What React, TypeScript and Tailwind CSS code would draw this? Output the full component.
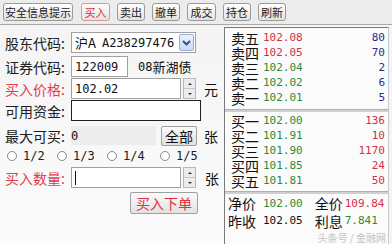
import React from "react";

const CJK = "'Noto Sans CJK SC', 'Noto Sans', sans-serif";
const MONO = "'DejaVu Sans Mono', 'Liberation Mono', monospace";

function Tab({ label, active, w }: { label: string; active?: boolean; w: string }) {
  return (
    <div
      className={`${w} h-[18px] flex items-center justify-center rounded-[3px] border text-[11px] leading-none whitespace-nowrap bg-gradient-to-b from-[#ffffff] to-[#e2e2e2] ${
        active ? "border-[#d89aa0] text-[#e0303c]" : "border-[#9a9a9a] text-[#202020]"
      }`}
    >
      {label}
    </div>
  );
}

function Spinner() {
  return (
    <div className="w-[13px] h-[21px] flex flex-col ml-[2px] border border-[#b8b8b8] bg-[#ececec]">
      <div className="flex-1 flex items-center justify-center border-b border-[#c8c8c8]">
        <div className="w-0 h-0 border-l-[2px] border-r-[2px] border-b-[2px] border-l-transparent border-r-transparent border-b-[#333]" />
      </div>
      <div className="flex-1 flex items-center justify-center">
        <div className="w-0 h-0 border-l-[2px] border-r-[2px] border-t-[2px] border-l-transparent border-r-transparent border-t-[#333]" />
      </div>
    </div>
  );
}

function Label({ text, red }: { text: string; red?: boolean }) {
  return (
    <div className={`w-[66px] shrink-0 text-[14px] leading-none whitespace-nowrap ${red ? "text-[#e0404c]" : "text-[#202020]"}`}>
      {text}
    </div>
  );
}

function Radio({ label, w }: { label: string; w: string }) {
  return (
    <div className={`${w} flex items-center gap-[6px]`}>
      <div className="w-[10px] h-[10px] rounded-full border border-[#8a8a8a] bg-white" />
      <span className="text-[12px] leading-none text-[#202020]" style={{ fontFamily: MONO }}>
        {label}
      </span>
    </div>
  );
}

type Row = { l: string; p: string; pc: string; q: string; qc: string };

const sells: Row[] = [
  { l: "卖五", p: "102.08", pc: "text-[#d0304c]", q: "80", qc: "text-[#2a2a8a]" },
  { l: "卖四", p: "102.05", pc: "text-[#d0304c]", q: "70", qc: "text-[#2a2a8a]" },
  { l: "卖三", p: "102.04", pc: "text-[#2e8a3a]", q: "2", qc: "text-[#2a2a8a]" },
  { l: "卖二", p: "102.02", pc: "text-[#2e8a3a]", q: "6", qc: "text-[#2a2a8a]" },
  { l: "卖一", p: "102.01", pc: "text-[#2e8a3a]", q: "5", qc: "text-[#2a2a8a]" },
];
const buys: Row[] = [
  { l: "买一", p: "102.00", pc: "text-[#2e8a3a]", q: "136", qc: "text-[#d0304c]" },
  { l: "买二", p: "101.91", pc: "text-[#2e8a3a]", q: "10", qc: "text-[#d0304c]" },
  { l: "买三", p: "101.90", pc: "text-[#2e8a3a]", q: "1170", qc: "text-[#d0304c]" },
  { l: "买四", p: "101.85", pc: "text-[#2e8a3a]", q: "24", qc: "text-[#d0304c]" },
  { l: "买五", p: "101.81", pc: "text-[#2e8a3a]", q: "50", qc: "text-[#d0304c]" },
];

function BookRow({ r }: { r: Row }) {
  return (
    <div className="h-[15px] flex items-center pl-[6px] pr-[3px] whitespace-nowrap">
      <span className="w-[32px] text-[14px] leading-none text-[#111]">{r.l}</span>
      <span className={`text-[11px] leading-none ${r.pc}`} style={{ fontFamily: MONO }}>
        {r.p}
      </span>
      <span className={`ml-auto text-[11px] leading-none ${r.qc}`} style={{ fontFamily: MONO }}>
        {r.q}
      </span>
    </div>
  );
}

export default function App() {
  return (
    <div className="w-[392px] h-[244px] bg-[#f4f4f4] overflow-hidden flex flex-col" style={{ fontFamily: CJK }}>
      {/* tab bar */}
      <div className="h-[25px] shrink-0 flex items-center pl-[3px] gap-[7px] bg-[#ececec] border-b border-[#a8a8a8]">
        <div className="mr-[1px]">
          <Tab label="安全信息提示" w="w-[70px]" />
        </div>
        <Tab label="买入" active w="w-[29px]" />
        <Tab label="卖出" w="w-[28px]" />
        <Tab label="撤单" w="w-[28px]" />
        <Tab label="成交" w="w-[29px]" />
        <Tab label="持仓" w="w-[28px]" />
        <Tab label="刷新" w="w-[28px]" />
      </div>

      <div className="flex flex-1 min-h-0">
        {/* left form */}
        <div className="w-[224px] shrink-0 flex flex-col pl-[5px] pt-[7px] bg-gradient-to-b from-[#f4f4f4] to-[#fbfbfb]">
          {/* 股东代码 */}
          <div className="h-[21px] flex items-center">
            <Label text="股东代码:" />
            <div className="w-[125px] h-[21px] flex items-center bg-white border border-[#a0a0a0] whitespace-nowrap">
              <span className="pl-[3px] text-[13px] leading-none text-[#111]">沪A</span>
              <span className="pl-[6px] text-[12px] leading-none text-[#111]" style={{ fontFamily: MONO }}>
                A238297476
              </span>
              <div className="ml-auto w-[15px] h-[17px] mr-[1px] flex items-center justify-center rounded-[2px] border border-[#98b0d0] bg-gradient-to-b from-[#eaf2fc] to-[#c8daf2]">
                <svg width="9" height="6" viewBox="0 0 9 6">
                  <path d="M1 1 L4.5 4.5 L8 1" stroke="#2a4a8a" strokeWidth="1.8" fill="none" />
                </svg>
              </div>
            </div>
          </div>
          {/* 证券代码 */}
          <div className="h-[21px] mt-[3px] flex items-center whitespace-nowrap">
            <Label text="证券代码:" />
            <div className="w-[57px] h-[21px] flex items-center bg-white border border-[#a0a0a0]">
              <span className="pl-[3px] text-[12px] leading-none text-[#111]" style={{ fontFamily: MONO }}>
                122009
              </span>
            </div>
            <span className="ml-[10px] text-[12px] leading-none text-[#111]" style={{ fontFamily: MONO }}>
              08
            </span>
            <span className="text-[13px] leading-none text-[#111]">新湖债</span>
          </div>
          {/* 买入价格 */}
          <div className="h-[21px] mt-[1px] flex items-center">
            <Label text="买入价格:" red />
            <div className="w-[110px] h-[21px] flex items-center bg-white border border-[#a0a0a0]">
              <span className="pl-[3px] text-[12px] leading-none text-[#111]" style={{ fontFamily: MONO }}>
                102.02
              </span>
            </div>
            <Spinner />
            <span className="ml-[8px] text-[14px] leading-none text-[#111]">元</span>
          </div>
          {/* 可用资金 */}
          <div className="h-[21px] mt-[1px] flex items-center">
            <Label text="可用资金:" />
            <div className="w-[130px] h-[21px] bg-white border border-[#202020]" />
          </div>
          {/* 最大可买 */}
          <div className="h-[21px] mt-[4px] flex items-center">
            <Label text="最大可买:" />
            <div className="w-[85px] h-[19px] flex items-center bg-[#ececec]">
              <span className="text-[12px] leading-none text-[#111]" style={{ fontFamily: MONO }}>
                0
              </span>
            </div>
            <div className="ml-[5px] w-[36px] h-[20px] flex items-center justify-center rounded-[2px] border border-[#a0a0a0] bg-gradient-to-b from-[#fafafa] to-[#e0e0e0] text-[14px] leading-none text-[#111] whitespace-nowrap">
              全部
            </div>
            <span className="ml-[7px] text-[14px] leading-none text-[#111]">张</span>
          </div>
          {/* radios */}
          <div className="h-[18px] mt-[1px] flex items-center pl-[2px]">
            <Radio label="1/2" w="w-[50px]" />
            <Radio label="1/3" w="w-[50px]" />
            <Radio label="1/4" w="w-[53px]" />
            <Radio label="1/5" w="w-[40px]" />
          </div>
          {/* 买入数量 */}
          <div className="h-[21px] mt-[2px] flex items-center">
            <Label text="买入数量:" red />
            <div className="w-[110px] h-[21px] flex items-center bg-white border border-[#a0a0a0]">
              <div className="ml-[3px] w-[1px] h-[14px] bg-[#111]" />
            </div>
            <Spinner />
            <span className="ml-[9px] text-[14px] leading-none text-[#111]">张</span>
          </div>
          {/* submit */}
          <div className="mt-[4px] flex pl-[125px]">
            <div className="w-[68px] h-[22px] flex items-center justify-center rounded-[2px] border border-[#a0a0a0] bg-gradient-to-b from-[#fafafa] to-[#e2e2e2] text-[14px] leading-none text-[#e0303c] whitespace-nowrap">
              买入下单
            </div>
          </div>
        </div>

        {/* right order book */}
        <div className="flex-1 mt-[2px] mr-[3px] flex flex-col border-l border-t border-[#7a7a7a] border-r border-r-[#c8c8c8] bg-[#fbfbfb]">
          <div className="flex flex-col pt-[2px] pb-[4px]">
            {sells.map((r) => (
              <BookRow key={r.l} r={r} />
            ))}
          </div>
          <div className="h-[3px] bg-[#d0d0d0] border-t border-[#b0b0b0]" />
          <div className="flex flex-col pt-[1px] pb-[3px]">
            {buys.map((r) => (
              <BookRow key={r.l} r={r} />
            ))}
          </div>
          <div className="h-[3px] bg-[#d0d0d0] border-t border-[#b0b0b0]" />
          <div className="relative flex-1 flex flex-col pl-[3px] pt-[1px] whitespace-nowrap">
            <div className="h-[16px] flex items-center">
              <span className="text-[14px] leading-none text-[#111]">净价</span>
              <span className="ml-[7px] text-[11px] leading-none text-[#2e8a3a]" style={{ fontFamily: MONO }}>
                102.00
              </span>
              <span className="ml-[12px] text-[14px] leading-none text-[#111]">全价</span>
              <span className="ml-[2px] text-[11px] leading-none text-[#d0304c]" style={{ fontFamily: MONO }}>
                109.84
              </span>
            </div>
            <div className="h-[19px] flex items-center">
              <span className="text-[14px] leading-none text-[#111]">昨收</span>
              <span className="ml-[7px] text-[11px] leading-none text-[#111]" style={{ fontFamily: MONO }}>
                102.05
              </span>
              <span className="ml-[12px] text-[14px] leading-none text-[#111]">利息</span>
              <span className="ml-[2px] text-[11px] leading-none text-[#2e8a3a]" style={{ fontFamily: MONO }}>
                7.841
              </span>
            </div>
            <div className="absolute right-[2px] bottom-[1px] text-[10px] leading-none text-[#c4c4c4]">
              头条号 / 金融网
            </div>
          </div>
        </div>
      </div>
    </div>
  );
}
